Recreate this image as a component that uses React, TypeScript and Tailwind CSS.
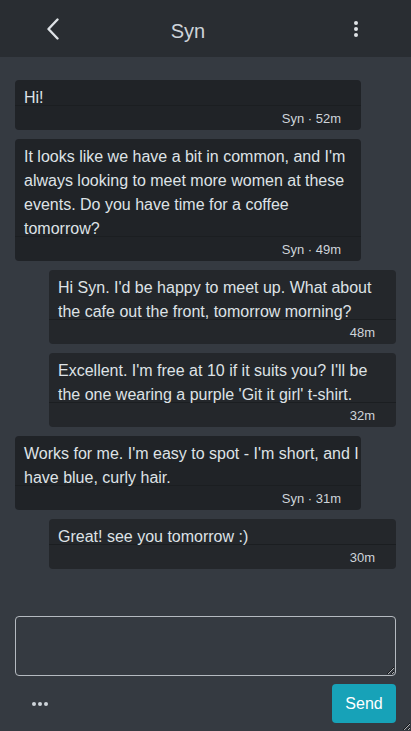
import React from 'react';

type Msg = { text: string; meta: string; mine: boolean };

const messages: Msg[] = [
    { text: 'Hi!', meta: 'Syn · 52m', mine: false },
    {
        text: "It looks like we have a bit in common, and I'm always looking to meet more women at these events. Do you have time for a coffee tomorrow?",
        meta: 'Syn · 49m',
        mine: false,
    },
    { text: "Hi Syn. I'd be happy to meet up. What about the cafe out the front, tomorrow morning?", meta: '48m', mine: true },
    { text: "Excellent. I'm free at 10 if it suits you? I'll be the one wearing a purple 'Git it girl' t-shirt.", meta: '32m', mine: true },
    { text: "Works for me. I'm easy to spot - I'm short, and I have blue, curly hair.", meta: 'Syn · 31m', mine: false },
    { text: 'Great! see you tomorrow :)', meta: '30m', mine: true },
];

const Bubble = ({ msg }: { msg: Msg }) => (
    <div
        className={`rounded-[4px] ${msg.mine ? 'w-[347px] self-end bg-[#24272b]' : 'w-[346px] self-start bg-[#202327]'}`}
    >
        <div
            className={`pl-[9px] pt-[6px] text-[16px] leading-[24px] text-[#dee2e6] ${
                msg.mine ? 'pr-[4px]' : 'pr-0'
            }`}
        >
            {msg.text}
        </div>
        <div
            className={`-mt-[5px] border-t border-[#1b1e21] pt-[4px] pb-[2px] text-right text-[13px] leading-[18px] text-[#ced4da] ${
                msg.mine ? 'pr-[21px]' : 'pr-[20px]'
            }`}
        >
            {msg.meta}
        </div>
    </div>
);

export default function App() {
    return (
        <div className="flex h-[731px] w-[411px] flex-col overflow-hidden resize bg-[#353a41] font-['Liberation_Sans',Arial,sans-serif]">
            <header className="flex h-[57px] shrink-0 items-center bg-[#292d32] text-[#dee2e6]">
                <div className="flex w-[106px] justify-center">
                    <svg width="14" height="22" viewBox="0 0 14 22" fill="none">
                        <path d="M11.5 1.5 L2.5 11 L11.5 20.5" stroke="#dee2e6" strokeWidth="2.4" strokeLinecap="round" strokeLinejoin="round" />
                    </svg>
                </div>
                <div className="mt-[4px] flex-1 text-center text-[20px] leading-[28px] text-[#ced4da]">Syn</div>
                <div className="flex w-[141px] justify-end pr-[53px]">
                    <div className="flex flex-col gap-[2px]">
                        <span className="h-[4px] w-[4px] rounded-full bg-[#dee2e6]" />
                        <span className="h-[4px] w-[4px] rounded-full bg-[#dee2e6]" />
                        <span className="h-[4px] w-[4px] rounded-full bg-[#dee2e6]" />
                    </div>
                </div>
            </header>

            <main className="flex flex-1 flex-col gap-[9px] px-[15px] pt-[23px]">
                {messages.map((m, i) => (
                    <Bubble key={i} msg={m} />
                ))}
            </main>

            <footer className="shrink-0 px-[15px] pb-[8px]">
                <textarea className="block h-[60px] w-full rounded-[4px] border border-[#b5bac0] bg-transparent text-[#dee2e6] outline-none" />
                <div className="mt-[8px] flex h-[39px] items-center justify-between">
                    <div className="ml-[17px] flex gap-[2px]">
                        <span className="h-[4px] w-[4px] rounded-full bg-[#ced4da]" />
                        <span className="h-[4px] w-[4px] rounded-full bg-[#ced4da]" />
                        <span className="h-[4px] w-[4px] rounded-full bg-[#ced4da]" />
                    </div>
                    <button className="h-[39px] w-[64px] rounded-[4px] bg-[#17a2b8] text-[16px] text-white">Send</button>
                </div>
            </footer>
        </div>
    );
}
